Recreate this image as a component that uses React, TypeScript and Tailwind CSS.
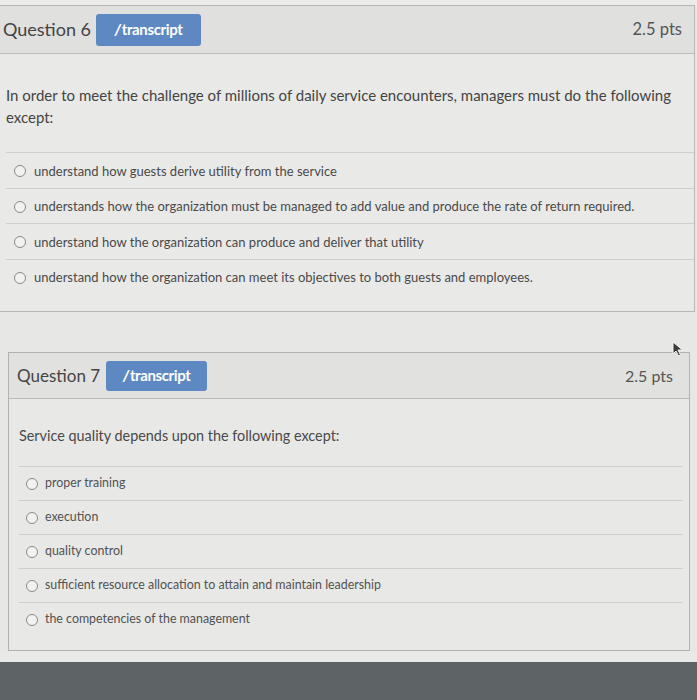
import React from 'react';

interface Question {
  num: number;
  text: string[];
  answers: string[];
}

const q6: Question = {
  num: 6,
  text: [
    'In order to meet the challenge of millions of daily service encounters, managers must do the following',
    'except:',
  ],
  answers: [
    'understand how guests derive utility from the service',
    'understands how the organization must be managed to add value and produce the rate of return required.',
    'understand how the organization can produce and deliver that utility',
    'understand how the organization can meet its objectives to both guests and employees.',
  ],
};

const q7: Question = {
  num: 7,
  text: ['Service quality depends upon the following except:'],
  answers: [
    'proper training',
    'execution',
    'quality control',
    'sufficient resource allocation to attain and maintain leadership',
    'the competencies of the management',
  ],
};

const TranscriptButton = ({ className }: { className: string }) => (
  <button
    type="button"
    className={`flex items-center justify-center rounded-[3px] bg-[#5d88c1] text-white font-bold text-[15px] tracking-tight ${className}`}
  >
    <span className="mr-[1px] italic font-black">/</span>
    <span>transcript</span>
  </button>
);

const Radio = () => (
  <span className="inline-block w-[12px] h-[12px] rounded-full border border-[#8a8a8a] bg-[#f2f2f0] shrink-0" />
);

const Cursor = () => (
  <svg width="12" height="16" viewBox="0 0 12 16" className="absolute left-[672px] top-[341px]">
    <path d="M1 1 L1 13 L4 10 L6.5 15 L8.5 14 L6 9 L10.5 9 Z" fill="#3a3a3a" stroke="#f5f5f5" strokeWidth="1" />
  </svg>
);

const App = () => {
  return (
    <div
      className="relative w-[697px] h-[700px] overflow-hidden bg-[#e7e7e5] text-[#4d4d4d] flex flex-col"
      style={{ fontFamily: 'Lato, "Open Sans", sans-serif' }}
    >
      <div className="h-[5px] bg-[#ebebe9]" />

      {/* Question 6 */}
      <div className="border-t border-b border-r border-[#b7b7b5] mr-[2px]">
        <div className="h-[48px] bg-[#e0e0de] border-b border-[#bdbdbb] flex items-center justify-between pl-[3px] pr-[12px]">
          <div className="flex items-center gap-[5px]">
            <span className="text-[18px] text-[#444]">Question 6</span>
            <TranscriptButton className="w-[105px] h-[32px]" />
          </div>
          <span className="text-[16.5px] text-[#555]">2.5 pts</span>
        </div>
        <div className="bg-[#e9e9e7] pl-[6px] pt-[30px] pb-[17px]">
          <p className="text-[15px] leading-[22px] text-[#444] mb-[24px]">
            {q6.text[0]}
            <br />
            {q6.text[1]}
          </p>
          {q6.answers.map((a) => (
            <div key={a} className="h-[35.5px] border-t border-[#cfcfcd] flex items-center gap-[8px] pl-[8px] pt-[2px]">
              <Radio />
              <span className="text-[13px] text-[#4a4a4a]">{a}</span>
            </div>
          ))}
        </div>
      </div>

      <div className="h-[40px]" />

      {/* Question 7 */}
      <div className="relative ml-[8px] mr-[7px] border border-[#b2b2b0]">
        <div className="h-[46px] bg-[#e1e1df] border-b border-[#b9b9b7] flex items-center justify-between pl-[8px] pr-[16px]">
          <div className="flex items-center gap-[6px]">
            <span className="text-[17px] text-[#454545]">Question 7</span>
            <TranscriptButton className="w-[101px] h-[30px]" />
          </div>
          <span className="text-[16px] text-[#555]">2.5 pts</span>
        </div>
        <div className="bg-[#e8e8e6] pl-[10px] pt-[27px] pb-[14px]">
          <p className="text-[14.4px] leading-[20px] text-[#4a4a4a] mb-[20px]">{q7.text[0]}</p>
          {q7.answers.map((a) => (
            <div key={a} className="h-[34px] border-t border-[#cfcfcd] flex items-center gap-[7px] pl-[7px] mr-[6px]">
              <Radio />
              <span className="text-[12.4px] text-[#525252]">{a}</span>
            </div>
          ))}
        </div>
      </div>

      <div className="h-[11px] bg-[#e9e9e8]" />
      <div className="flex-1 bg-[#5e6465]" />

      <Cursor />
    </div>
  );
};

export default App;
